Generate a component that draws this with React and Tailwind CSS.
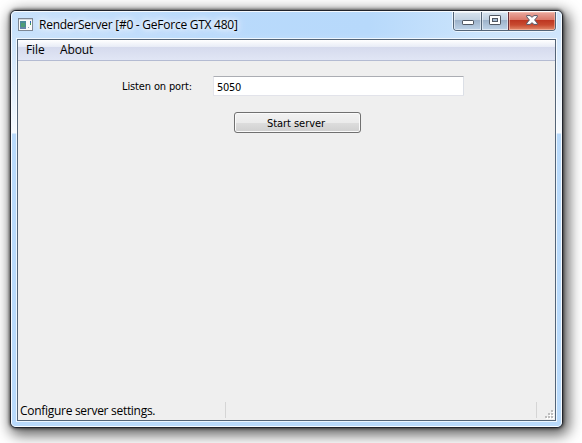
const uiFont = "font-['Open_Sans','Noto_Sans',sans-serif] text-black whitespace-nowrap";
const formFont = "font-['DejaVu_Sans_Condensed','DejaVu_Sans',sans-serif] text-black whitespace-nowrap";

function AppIcon() {
  return (
    <svg width="15" height="13" viewBox="0 0 15 13" shapeRendering="crispEdges">
      <rect width="15" height="13" fill="#7d8794" />
      <rect x="1" y="1" width="13" height="11" fill="#fafafa" />
      <rect x="1" y="1" width="13" height="1" fill="#d4d8dc" />
      <rect x="2" y="3" width="6" height="8" fill="#4c8a9a" />
      <rect x="3" y="5" width="4" height="4" fill="#4f9d75" />
      <rect x="2" y="9" width="6" height="2" fill="#6684a8" />
      <rect x="12" y="3" width="1" height="2" fill="#2861b5" />
      <rect x="12" y="5" width="1" height="2" fill="#3b9a54" />
      <rect x="10" y="9" width="1" height="1" fill="#8ea5b4" />
    </svg>
  );
}

function CaptionButtons() {
  return (
    <div className="flex h-[19px] w-[103px] overflow-hidden rounded-b-[4px] border border-t-0 border-[#536477] shadow-[0_0_0_1px_rgba(255,255,255,0.65)]">
      <div className="flex w-[28px] items-center justify-center border-r border-[#536477] bg-[linear-gradient(#d7e3ef_0%,#c1d1e1_44%,#9cb1c9_45%,#bed3e8_100%)] shadow-[inset_0_0_0_1px_rgba(255,255,255,0.5)]">
        <svg width="12" height="5" viewBox="0 0 12 5" className="mt-[3px]">
          <rect x=".5" y=".5" width="11" height="4" rx=".6" fill="#fff" stroke="#505762" />
        </svg>
      </div>
      <div className="flex w-[27px] items-center justify-center border-r border-[#6c3038] bg-[linear-gradient(#d7e3ef_0%,#c1d1e1_44%,#9cb1c9_45%,#bed3e8_100%)] shadow-[inset_0_0_0_1px_rgba(255,255,255,0.5)]">
        <svg width="12" height="10" viewBox="0 0 12 10" className="mb-[2px]">
          <rect x=".5" y=".5" width="11" height="9" rx=".6" fill="#fff" stroke="#505762" />
          <rect x="3.5" y="3.5" width="5" height="3" fill="#a5bbd2" stroke="#505762" />
        </svg>
      </div>
      <div className="flex flex-1 items-center justify-center bg-[linear-gradient(#e9aaa0_0%,#d97768_44%,#bd3520_45%,#c84a30_72%,#e28b6c_100%)] shadow-[inset_0_0_0_1px_rgba(255,205,190,0.5)]">
        <svg width="12" height="10" viewBox="0 0 12 10" className="mb-[2px]">
          <path d="M.7.6H4L6 2.3 8 .6H11.3V1.8L8.6 5l2.7 3.2v1.2H8L6 7.7 4 9.4H.7V8.2L3.4 5 .7 1.8z" fill="#fff" stroke="#535666" strokeWidth="1" strokeLinejoin="round" />
        </svg>
      </div>
    </div>
  );
}

function TitleBar() {
  return (
    <div className="flex h-[27px] items-start justify-between">
      <div className="flex pl-[1px] pt-[6px]">
        <AppIcon />
        <span className={`${uiFont} ml-[6px] mt-[-1px] text-[12px] leading-[16px] tracking-[-0.25px] [text-shadow:0_0_5px_#fff,0_0_10px_#fff,0_0_14px_#fff]`}>
          RenderServer [#0 - GeForce GTX 480]
        </span>
      </div>
      <CaptionButtons />
    </div>
  );
}

function MenuBar() {
  return (
    <div className={`${uiFont} flex h-[21px] border-b border-[#b4bbd2] bg-[linear-gradient(#ffffff_0%,#e8ecf6_34%,#d5daed_35%,#e1e6f5_100%)] pl-2 text-[12px] leading-[20px]`}>
      <span className="w-[34px] tracking-[-0.1px]">File</span>
      <span className="tracking-[-0.15px]">About</span>
    </div>
  );
}

function ServerForm() {
  return (
    <div className="flex-1 pt-[15px]">
      <div className="flex h-[20px] items-center">
        <label className={`${formFont} ml-[104px] w-[91px] pt-[1px] text-[11px] leading-[20px] tracking-[-0.13px]`}>Listen on port:</label>
        <div className={`${formFont} h-[20px] w-[251px] rounded-[1px] border border-[#e2e3ea] border-t-[#abadb3] border-r-[#dbdfe6] bg-white pl-[3px] pt-[1px] text-[11px] leading-[20px] tracking-[-0.3px]`}>5050</div>
      </div>
      <button className={`${formFont} ml-[216px] mt-[16px] block h-[21px] w-[127px] rounded-[3px] border border-[#707070] bg-[linear-gradient(#f2f2f2_0%,#ebebeb_50%,#dddddd_51%,#cfcfcf_100%)] pr-[3px] pt-[1px] text-center text-[11px] leading-[19px] tracking-[-0.04px] shadow-[inset_0_0_0_1px_#fafafa]`}>Start server</button>
    </div>
  );
}

function StatusBar() {
  return (
    <div className="flex h-[18px]">
      <div className={`${uiFont} h-[16px] w-[208px] border-r border-[#d5d5d5] pl-[2px] pt-[1px] text-[12px] leading-[16px] tracking-[-0.29px]`}>Configure server settings.</div>
      <div className="h-[16px] w-[311px] border-r border-[#d5d5d5]" />
      <svg width="9" height="9" viewBox="0 0 9 9" className="ml-[8px] mt-[8px]" shapeRendering="crispEdges">
        {[[6, 0], [3, 3], [6, 3], [0, 6], [3, 6], [6, 6]].map(([x, y]) => (
          <g key={`${x}-${y}`}>
            <rect x={x + 1} y={y + 1} width="2" height="2" fill="#fff" />
            <rect x={x} y={y} width="2" height="2" fill="#bdbdbd" />
          </g>
        ))}
      </svg>
    </div>
  );
}

export default function App() {
  return (
    <main className="h-[443px] w-[582px] overflow-hidden bg-white pl-[10px] pt-[10px]">
      <div className="h-[418px] w-[553px] rounded-[6px] border border-[#20232b] bg-[#b9dafb] shadow-[0_0_3px_1px_rgba(0,0,0,0.5),3px_4px_14px_3px_rgba(0,0,0,0.62)]">
        <div className="h-full rounded-[5px] border border-white/85 bg-[linear-gradient(90deg,#c9e2fb_0%,#b9dafb_35%,#b7d9fb_65%,#cbe4fc_85%,#cfe5fc_100%)]">
          <div className="h-full rounded-[4px] bg-[linear-gradient(transparent_20px,rgba(255,255,255,0.8)_118px,rgba(255,255,255,0.85)_121px,#b9dafb_122px,#b9dafb_100%)] px-[5px]">
            <TitleBar />
            <div className="flex h-[382px] flex-col border border-[#536477] bg-[#efefef] shadow-[0_0_0_1px_rgba(255,255,255,0.75)]">
              <MenuBar />
              <ServerForm />
              <StatusBar />
            </div>
          </div>
        </div>
      </div>
    </main>
  );
}
